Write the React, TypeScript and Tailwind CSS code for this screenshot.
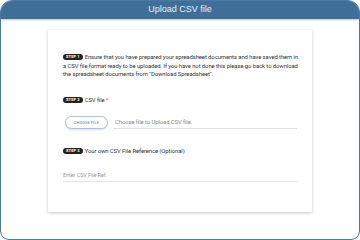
const StepBadge = ({ n }: { n: number }) => (
    <span className="inline-flex items-center justify-center h-[6px] px-[3px] mr-[2px] rounded-full bg-[#222] text-white text-[4px] font-bold leading-none align-[1px] tracking-[0.1px]">
        {`STEP ${n}`}
    </span>
)

export default function App() {
    return (
        <div className="w-[360px] h-[240px] bg-white font-['Roboto',sans-serif]">
            <div className="w-full h-full flex flex-col border border-[#4b79a3] rounded-t-[12px] rounded-b-[9px] overflow-hidden">
                <div className="h-[18px] shrink-0 bg-[#3f6f99] flex items-center justify-center shadow-[0_1px_2px_rgba(0,0,0,0.25)] z-10">
                    <span className="text-[9px] text-[#e9eff6] font-['Liberation_Sans',sans-serif] font-medium">Upload CSV file</span>
                </div>
                <div className="flex-1 flex justify-center pt-[11px]">
                    <div className="w-[264px] h-[182px] bg-white shadow-[0_1px_3px_rgba(0,0,0,0.22)] pl-[15px] pr-[13px] pt-[23px] text-[#333] text-[5.9px] leading-[8.6px] tracking-[-0.08px]">
                        <p>
                            <StepBadge n={1} />
                            Ensure that you have prepared your spreadsheet documents and have saved them in a CSV file format ready to be uploaded. If you have not done this please go back to download the spreadsheet documents from "Download Spreadsheet".
                        </p>

                        <p className="mt-[17px]">
                            <StepBadge n={2} />
                            CSV file <span className="text-[#e53935]">*</span>
                        </p>
                        <div className="flex items-center mt-[12px] pl-[2px] pr-[2px]">
                            <button className="w-[43px] h-[13px] shrink-0 rounded-full border border-[#a9c3e3] bg-white shadow-[0_1px_2px_rgba(0,0,0,0.15)] text-[3.8px] text-[#4a78b5] tracking-[0.2px]">
                                CHOOSE FILE
                            </button>
                            <div className="flex-1 ml-[5px] border-b border-[#e2e2e2] h-[13px] flex items-center pl-[2px] text-[#888]">
                                Choose file to Upload CSV file.
                            </div>
                        </div>

                        <p className="mt-[18px]">
                            <StepBadge n={3} />
                            Your own CSV File Reference (Optional)
                        </p>
                        <div className="mt-[14px] mr-[2px] border-b border-[#e2e2e2] h-[12px] flex items-center text-[#999] text-[5.5px]">
                            Enter CSV File Ref.
                        </div>
                    </div>
                </div>
            </div>
        </div>
    )
}
